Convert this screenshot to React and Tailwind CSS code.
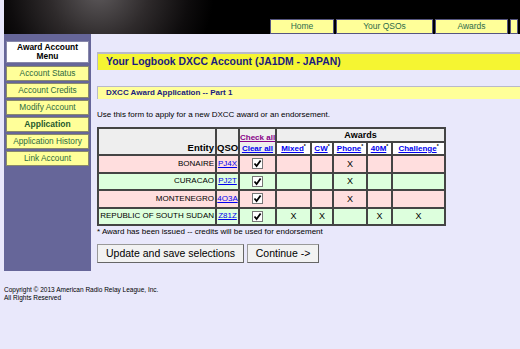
import React from "react";

const menu = [
  { label: "Account Status" },
  { label: "Account Credits" },
  { label: "Modify Account" },
  { label: "Application", bold: true },
  { label: "Application History" },
  { label: "Link Account" },
];

const rows = [
  { entity: "BONAIRE", qso: "PJ4X", marks: ["", "", "X", "", ""], tone: "pink" },
  { entity: "CURACAO", qso: "PJ2T", marks: ["", "", "X", "", ""], tone: "green" },
  { entity: "MONTENEGRO", qso: "4O3A", marks: ["", "", "X", "", ""], tone: "pink" },
  { entity: "REPUBLIC OF SOUTH SUDAN", qso: "Z81Z", marks: ["X", "X", "", "X", "X"], tone: "green" },
];

const awards = ["Mixed", "CW", "Phone", "40M", "Challenge"];

function Check() {
  return (
    <span className="inline-flex w-[11px] h-[11px] bg-white border border-[#777] items-center justify-center align-middle">
      <svg width="9" height="9" viewBox="0 0 9 9">
        <path d="M1.5 4.5 L3.6 7 L7.6 1.5" fill="none" stroke="#000" strokeWidth="1.8" />
      </svg>
    </span>
  );
}

export default function App() {
  const cell = "border-2 border-[#444] p-0 overflow-hidden";
  return (
    <div className="w-[520px] h-[349px] overflow-hidden bg-[#e9e8fb] font-['Liberation_Sans',Arial,sans-serif] text-black">
      {/* header */}
      <div className="ml-[4px] h-[34px] bg-black bg-[radial-gradient(circle_at_95px_-10px,#5e5a5c_0px,#2e2a2b_50px,#0e0c0d_90px,#000_115px)] flex items-end pl-[266px]">
        {["Home", "Your QSOs", "Awards", ""].map((t, i) => (
          <div
            key={i}
            className={`h-[15px] mr-[2px] bg-[#ffff99] border border-[#55557f] flex items-center justify-center text-[8.5px] text-[#2e6b4a] ${
              i === 0 ? "w-[64px]" : i === 1 ? "w-[97px]" : i === 2 ? "w-[73px]" : "flex-1 mr-0"
            }`}
          >
            {t}
          </div>
        ))}
      </div>

      <div className="flex">
        {/* sidebar */}
        <div className="ml-[4px] w-[87px] h-[237px] bg-[#666699] px-[2px] pt-[7px] flex flex-col gap-[2px]">
          <div className="h-[22px] mb-[1px] bg-white border border-[#8888aa] flex flex-col items-center justify-center text-[8.4px] font-bold leading-[9px]">
            <span>Award Account</span>
            <span>Menu</span>
          </div>
          {menu.map((m) => (
            <div
              key={m.label}
              className={`h-[15px] bg-[#ffff99] border border-[#8a8a6a] flex items-center justify-center whitespace-nowrap ${
                m.bold ? "font-bold text-[8.5px] text-[#1f5a2e]" : "text-[8.3px] text-[#2e6b3e]"
              }`}
            >
              {m.label}
            </div>
          ))}
        </div>

        {/* main */}
        <div className="flex-1 pl-[6px] pt-[18px]">
          <div className="h-[18px] bg-[#f5f532] border-t-2 border-l border-[#b9b9c9] flex items-center pl-[8px] text-[10.4px] font-bold text-[#1a1a80]">
            Your Logbook DXCC Account (JA1DM - JAPAN)
          </div>
          <div className="mt-[16px] h-[13px] bg-[#ffff99] border-t border-l border-[#b9b9c9] flex items-center pl-[8px] text-[8px] font-bold text-[#1a1a80]">
            DXCC Award Application -- Part 1
          </div>
          <div className="mt-[10px] text-[8px] leading-[12px]">
            Use this form to apply for a new DXCC award or an endorsement.
          </div>

          <table className="mt-[6px] table-fixed w-[347px] border-collapse border-2 border-[#444] text-[8px] leading-[10px]">
            <colgroup>
              <col className="w-[118px]" />
              <col className="w-[23px]" />
              <col className="w-[37px]" />
              <col className="w-[35px]" />
              <col className="w-[22px]" />
              <col className="w-[34px]" />
              <col className="w-[25px]" />
              <col className="w-[53px]" />
            </colgroup>
            <thead>
              <tr className="bg-[#eeeeee] h-[14px]">
                <th rowSpan={2} className={`${cell} text-right align-bottom pr-[1px] pb-[1px] font-bold text-[9.5px]`}>Entity</th>
                <th rowSpan={2} className={`${cell} align-bottom pb-[1px] font-bold text-[9.5px]`}>QSO</th>
                <th rowSpan={2} className={`${cell} align-bottom font-bold whitespace-nowrap leading-[11px]`}>
                  <div className="text-[#880088] underline">Check all</div>
                  <div className="text-[#0000ee] underline">Clear all</div>
                </th>
                <th colSpan={5} className={`${cell} font-bold text-[9px]`}>Awards</th>
              </tr>
              <tr className="bg-white h-[13px]">
                {awards.map((a) => (
                  <th key={a} className={`${cell} font-bold whitespace-nowrap`}>
                    <span className="text-[#0000ee] underline">{a}</span>
                    <sup className="text-[5px]">*</sup>
                  </th>
                ))}
              </tr>
            </thead>
            <tbody>
              {rows.map((r) => (
                <tr key={r.entity} className={`h-[17.5px] ${r.tone === "pink" ? "bg-[#ffdede]" : "bg-[#ddffdd]"}`}>
                  <td className={`${cell} text-right pr-[1px] whitespace-nowrap`}>{r.entity}</td>
                  <td className={`${cell} text-center`}>
                    <span className="text-[#0000ee] underline">{r.qso}</span>
                  </td>
                  <td className={`${cell} text-center`}>
                    <Check />
                  </td>
                  {r.marks.map((m, i) => (
                    <td key={i} className={`${cell} text-center text-[9px]`}>{m}</td>
                  ))}
                </tr>
              ))}
            </tbody>
          </table>

          <div className="mt-[1px] text-[8px] leading-[10px]">
            * Award has been issued -- credits will be used for endorsement
          </div>

          <div className="mt-[7px] flex gap-[3px]">
            <button className="h-[19px] w-[147px] bg-[#f2f2f2] border border-[#999] border-r-[#666] border-b-[#666] text-[10.5px] whitespace-nowrap">
              Update and save selections
            </button>
            <button className="h-[19px] w-[72px] bg-[#f2f2f2] border border-[#999] border-r-[#666] border-b-[#666] text-[10.5px] whitespace-nowrap">
              Continue -&gt;
            </button>
          </div>
        </div>
      </div>

      <div className="pl-[4px] pt-[15px] text-[6.5px] leading-[8px]">
        <div>Copyright © 2013 American Radio Relay League, Inc.</div>
        <div>All Rights Reserved</div>
      </div>
    </div>
  );
}
